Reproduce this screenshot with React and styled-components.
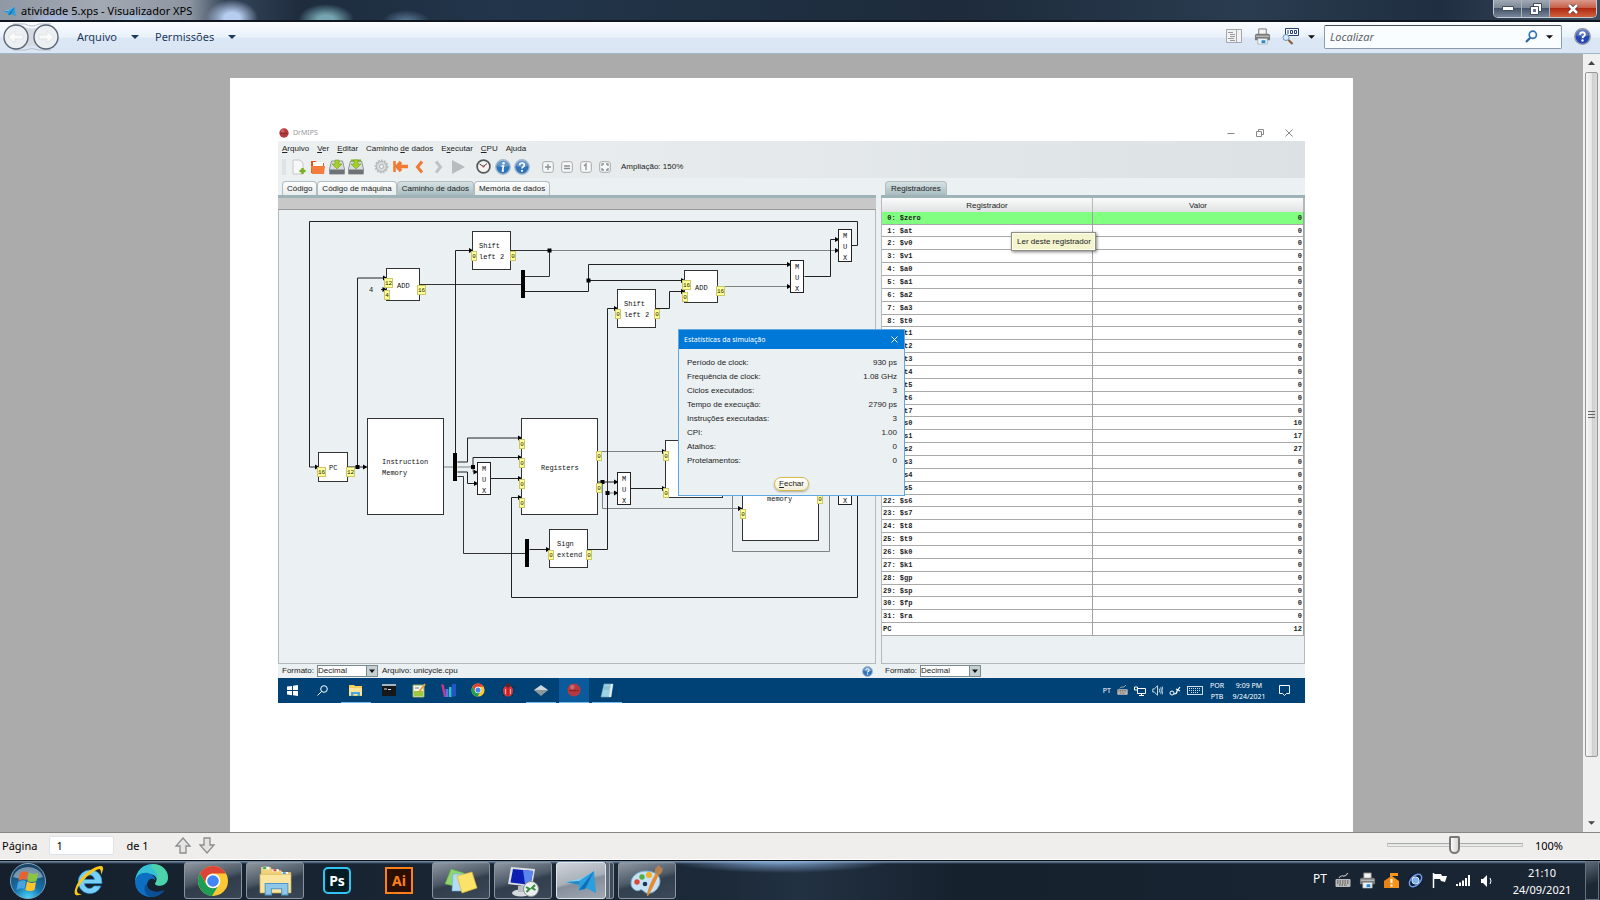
import React from "react";
import styled, { createGlobalStyle, css } from "styled-components";

const ui = '"Noto Sans", "Open Sans", sans-serif';
const swing = '"Liberation Sans", Arial, sans-serif';
const mono = '"Liberation Mono", "Courier New", monospace';

const GlobalStyle = createGlobalStyle`
  *, *::before, *::after { box-sizing: border-box; }
  html, body { margin: 0; height: 100%; }
  body { font-family: ${ui}; font-size: 11px; color: #000; overflow: hidden; }
  #root { height: 100%; }
  button, input, select { font: inherit; color: inherit; margin: 0; }
  button { border: 0; padding: 0; background: none; }
  svg { display: block; flex: none; }
`;

/* ---------- XPS viewer window ---------- */

const Screen = styled.div`
  display: flex;
  flex-direction: column;
  min-height: 100vh;
`;

const TitleBar = styled.header`
  display: flex;
  align-items: flex-start;
  height: 22px;
  padding: 0 3px 0 2px;
  border-bottom: 2px solid #10161f;
  background:
    radial-gradient(ellipse 26px 18px at 232px 18px, #b7cdf0 30%, transparent 100%),
    radial-gradient(ellipse 28px 16px at 326px 20px, #74a5b0 30%, transparent 100%),
    radial-gradient(ellipse 30px 14px at 55px 22px, #aab9e0 20%, transparent 100%),
    radial-gradient(ellipse 30px 14px at 135px 22px, #a9bfdc 20%, transparent 100%),
    radial-gradient(ellipse 24px 12px at 406px 22px, #5a7896 10%, transparent 100%),
    linear-gradient(90deg, #8f98a5 0, #a3a9b3 100px, #8c95a1 190px, #37475b 225px, #1e2c3e 300px, #22354a 500px, #1d2b3b 60%, #2a3c50 78%, #1f2e40 90%, #3c4c60 100%);
`;

const TitleText = styled.h1`
  flex: 1;
  display: flex;
  align-items: center;
  gap: 5px;
  margin: 0;
  height: 21px;
  font-size: 11px;
  font-weight: 400;
`;

const WindowButtons = styled.div`
  display: flex;
  height: 18px;
  border: 1px solid #c4cbd3;
  border-top: 0;
  border-radius: 0 0 5px 5px;
  overflow: hidden;
`;

const WindowButton = styled.button`
  display: grid;
  place-items: center;
  width: ${(p) => (p.$close ? 46 : 28)}px;
  border-right: ${(p) => (p.$close ? "0" : "1px solid #aab2bc")};
  background: ${(p) =>
    p.$close
      ? "linear-gradient(#d99a8c 0, #c8604a 45%, #b02a12 50%, #d0603c 100%)"
      : "linear-gradient(#a0a9b4 0, #7d8896 45%, #45536a 50%, #78869a 100%)"};
`;

const CommandBar = styled.nav`
  display: flex;
  align-items: center;
  height: 32px;
  padding: 0 9px 2px 3px;
  border-bottom: 1px solid #a3b4cd;
  background: linear-gradient(#fbfdff 0, #e9f1fa 48%, #dce7f5 52%, #dbe6f4 100%);
`;

const MenuButton = styled.button`
  display: flex;
  align-items: center;
  gap: 14px;
  margin-left: ${(p) => p.$lead}px;
  font-size: 11px;
  color: #1e395b;
`;

const Spacer = styled.span`
  flex: 1;
`;

const ToolButton = styled.button`
  display: grid;
  place-items: center;
  width: ${(p) => p.$w || 28}px;
  height: 24px;
`;

const SearchBox = styled.div`
  display: flex;
  align-items: center;
  width: 238px;
  height: 24px;
  margin: 0 12px 0 6px;
  padding: 0 1px 0 5px;
  border: 1px solid #8e9aa8;
  border-top-color: #444c55;
  border-radius: 2px;
  background: #fafdff;

  input {
    flex: 1;
    min-width: 0;
    padding: 0;
    border: 0;
    outline: 0;
    background: none;
    font-size: 11px;
  }
  input::placeholder { color: #5c6066; font-style: italic; opacity: 1; }
`;

const Viewer = styled.main`
  flex: 1;
  display: flex;
  min-height: 0;
  background: #ababab;
`;

const Sheet = styled.article`
  flex: 1;
  margin: 24px 230px 0;
  padding: 49px 48px 0;
  background: #fff;
`;

const ScrollBar = styled.div`
  display: flex;
  flex-direction: column;
  width: 17px;
  padding: 0 2px;
  background: #f0f0f0;
`;

const ScrollArrow = styled.button`
  display: grid;
  place-items: center;
  height: 18px;
`;

const ScrollThumb = styled.div`
  flex: 1;
  display: grid;
  place-items: center;
  margin-bottom: 57px;
  border: 1px solid #979797;
  border-radius: 2px;
  background: linear-gradient(90deg, #f7f7f7, #e6e6e6 50%, #cfcfd1 55%, #dadadc);
`;

const StatusBar = styled.footer`
  display: flex;
  align-items: center;
  height: 28px;
  padding: 0 37px 2px 2px;
  border-top: 1px solid #858585;
  border-bottom: 1px solid #fff;
  background: #f0eded;
  font-size: 11px;
`;

const PageInput = styled.input`
  width: 65px;
  height: 19px;
  margin: 0 12px 0 12px;
  padding: 0 6px;
  border: 1px solid #dde3ea;
  border-radius: 2px;
  background: #fff;
`;

const PageTotal = styled.span`
  width: 45px;
`;

const ZoomSlider = styled.input`
  appearance: none;
  width: 136px;
  height: 20px;
  margin: 0 12px 0 0;
  background: none;

  &::-webkit-slider-runnable-track {
    height: 4px;
    border: 1px solid #c6c6c6;
    border-top-color: #a9a9a9;
    background: #e8eaea;
  }
  &::-webkit-slider-thumb {
    appearance: none;
    width: 11px;
    height: 18px;
    margin-top: -8px;
    border: 2px solid #777;
    border-radius: 2px 2px 6px 6px;
    background: linear-gradient(90deg, #fafafa, #d8d8d8);
  }
`;

/* ---------- Windows 7 task bar ---------- */

const TaskBar = styled.footer`
  display: flex;
  height: 40px;
  padding: 0 1px 0 0;
  border-top: 1px solid #0a0f16;
  background:
    linear-gradient(rgba(150, 185, 220, 0.8), rgba(110, 140, 170, 0) 3px),
    radial-gradient(ellipse 110px 12px at 780px 0, rgba(130, 165, 210, 0.8) 20%, transparent 100%),
    linear-gradient(90deg, #16202d, #1b2938 45%, #223142 50%, #16212e 60%, #1a2634 100%);
`;

const TaskItems = styled.div`
  display: flex;
  gap: 4px;
`;

const TaskButton = styled.button`
  display: grid;
  place-items: center;
  width: ${(p) => p.$w || 58}px;
  margin: 1px 0;
  border-radius: 3px;
  ${(p) =>
    p.$open &&
    css`
      border: 1px solid #8b949e;
      background: linear-gradient(165deg, rgba(205, 212, 220, 0.65) 0, rgba(130, 142, 155, 0.5) 45%, rgba(70, 82, 96, 0.55) 55%, rgba(90, 105, 122, 0.5) 100%);
    `}
  ${(p) =>
    p.$active &&
    css`
      border: 1px solid #e0e5ea;
      background: linear-gradient(165deg, #d0d4da 0, #aab0b9 48%, #858e9a 54%, #a0a8b2 100%);
    `}
`;

const Stack = styled.div`
  display: flex;
  width: 58px;

  &::after {
    content: "";
    width: 8px;
    margin: 1px 0;
    border: 1px solid #8b949e;
    border-width: 1px 1px 1px 0;
    border-radius: 0 3px 3px 0;
    background: linear-gradient(90deg, #626e7c 0 3px, #9aa3ae 3px 4px, #3e4b5a 4px);
  }
`;

const AppBadge = styled.span`
  display: grid;
  place-items: center;
  width: 28px;
  height: 27px;
  border: 2px solid ${(p) => p.$tone};
  border-radius: ${(p) => p.$radius}px;
  background: ${(p) => p.$fill};
  color: ${(p) => p.$ink};
  font: 700 14px/1 ${ui};
`;

const Tray = styled.div`
  display: flex;
  align-items: center;
  color: #fff;
  font-size: 12px;
`;

const TrayIcon = styled.span`
  display: grid;
  place-items: center;
  width: 24px;
`;

const Language = styled.span`
  width: 16px;
  margin: 0 2px 5px 0;
`;

const Clock = styled.time`
  width: 86px;
  font-size: 11px;
  line-height: 17px;
  text-align: center;
  white-space: pre-line;
`;

const ShowDesktop = styled.button`
  align-self: stretch;
  width: 14px;
  border: 1px solid #66727f;
  background: linear-gradient(160deg, #5c6875, #1c2834 60%);
`;

/* ---------- DrMIPS capture on the page ---------- */

const Capture = styled.section`
  position: relative;
  font-family: ${swing};
  font-size: 8px;
  line-height: 12px;
  color: #222;
  background: #ebf0f2;
`;

const CaptureTitle = styled.div`
  display: flex;
  align-items: center;
  height: 14px;
  padding: 0 4px 2px 1px;
  gap: 4px;
  background: #fff;
  color: #999;
  font-family: ${ui};
  font-size: 7px;
`;

const CaptionButton = styled.button`
  display: grid;
  place-items: center;
  width: 25px;
  height: 12px;
`;

const Chrome = styled.div`
  background: linear-gradient(90deg, #ecf0f1, #dce1e3);
`;

const MenuRow = styled.div`
  display: flex;
  gap: 8px;
  height: 14px;
  padding: 1px 5px 0 4px;

  u { text-underline-offset: 1px; }
`;

const IconRow = styled.div`
  display: flex;
  align-items: center;
  height: 23px;
  padding-left: 4px;
`;

const Grip = styled.span`
  width: 4px;
  height: 16px;
  margin-right: 3px;
  background: #dfe3e4;
`;

const IconGroup = styled.div`
  display: flex;
  margin-right: 7px;
`;

const IconButton = styled.button`
  display: grid;
  place-items: center;
  width: 19px;
  height: 18px;
`;

const Panes = styled.div`
  display: grid;
  grid-template-columns: minmax(0, 598fr) minmax(0, 424fr);
  gap: 5px;
  padding-top: 3px;
`;

const Pane = styled.div`
  position: relative;
  display: flex;
  flex-direction: column;
`;

const TabRow = styled.div`
  display: flex;
  height: 17px;
  padding-left: 4px;
  border-bottom: 3px solid #9db3b8;
`;

const Tab = styled.button`
  padding: 0 ${(p) => p.$pad || 4}px;
  border: 1px solid #b3bcbf;
  border-bottom: 0;
  border-radius: 4px 4px 0 0;
  white-space: nowrap;
  background: ${(p) =>
    p.$on ? "linear-gradient(#d6e2e4, #a8bcc0)" : "linear-gradient(#fdfdfd, #e8eded)"};
`;

const HeaderStrip = styled.div`
  height: 12px;
  border-bottom: 1px solid #999;
  background: #c8c8c8;
`;

const Canvas = styled.div`
  flex: 1;
  border: 1px solid #b5babc;
  border-top: 0;

  svg { width: 100%; height: auto; }
`;

const FormatRow = styled.div`
  display: flex;
  align-items: center;
  height: 14px;
  padding: 0 3px 0 4px;
`;

const SelectBox = styled.span`
  position: relative;
  width: 61px;
  height: 12px;
  margin: 0 4px 0 3px;

  select {
    appearance: none;
    width: 100%;
    height: 100%;
    padding: 0;
    border: 1px solid #7b8a8f;
    border-radius: 0;
    background: #fff;
    line-height: 10px;
  }
  svg { position: absolute; top: 0; right: 0; pointer-events: none; }
`;

const TableFrame = styled.div`
  flex: 1;
  border: 1px solid #b5babc;
  border-width: 0 1px 1px;
`;

const RegTable = styled.table`
  width: 100%;
  border-collapse: separate;
  border-spacing: 0;
  table-layout: fixed;
  line-height: 10px;

  th {
    height: 14px;
    padding: 1px 0 0;
    border-right: 1px solid #b4b8ba;
    background: linear-gradient(#fbfbfb, #dfe1e2);
    font-weight: 400;
  }
`;

const RegRow = styled.tr`
  height: 13px;
  background: ${(p) => (p.$read ? "#80ff80" : "#fff")};
  font-family: ${mono};
  font-size: 7px;
  font-weight: 700;

  &:nth-child(7n + 2) { height: 12px; }

  td {
    padding: 0 1px;
    border-bottom: 1px solid #a9a9a9;
    border-right: 1px solid #a0a0a0;
    white-space: pre;
  }
  td + td { text-align: right; }
`;

const Tooltip = styled.div`
  position: absolute;
  left: 130px;
  top: 51px;
  padding: 3px 4px 2px 5px;
  border: 1px solid #8f8f84;
  background: #f4f4cf;
  outline: 1px solid #fffff0;
  outline-offset: -2px;
  box-shadow: 1px 1px 3px rgba(0, 0, 0, 0.5);
  white-space: nowrap;
`;

const Dialog = styled.section`
  position: absolute;
  left: 400px;
  top: 202px;
  width: 227px;
  height: 167px;
  display: flex;
  flex-direction: column;
  border: 1px solid #5fa9e0;
  background: #ebf0f2;
`;

const DialogTitle = styled.div`
  display: flex;
  align-items: center;
  justify-content: space-between;
  height: 19px;
  padding: 0 6px 0 5px;
  background: #0078d7;
  color: #fff;
  font: 7px/12px ${ui};
`;

const Stats = styled.dl`
  display: flex;
  flex-direction: column;
  margin: 0;
  padding: 7px 7px 0 8px;

  div {
    display: flex;
    justify-content: space-between;
    height: 14px;
    line-height: 14px;
  }
  dd { margin: 0; }
`;

const CloseButton = styled.button`
  align-self: center;
  height: 14px;
  margin-top: 9px;
  padding: 0 4px;
  border: 1px solid #d8b94a;
  border-radius: 7px;
  background: linear-gradient(#fff, #f2eed8);
  box-shadow: 0 1px 2px rgba(0, 0, 0, 0.3);
`;

const InnerTaskBar = styled.div`
  display: flex;
  justify-content: space-between;
  height: 25px;
  background: #004275;
  color: #fff;
  font-family: ${ui};
  font-size: 7px;
`;

const InnerApps = styled.div`
  display: flex;
  width: 347px;
`;

const InnerApp = styled.button`
  flex: 1;
  display: grid;
  place-items: center;
  margin: 0 ${(p) => (p.$open && !p.$active ? 3 : 0)}px;
  border-bottom: 1px solid ${(p) => (p.$open ? "#76b9ed" : "transparent")};
  background: ${(p) => (p.$active ? "#0a5a9c" : "none")};
`;

const InnerTray = styled.div`
  display: flex;
  align-items: center;
  gap: 6px;
  padding-right: 14px;
  line-height: 11px;
`;

const TwoLines = styled.span`
  min-width: ${(p) => p.$w}px;
  text-align: center;
  white-space: pre-line;
`;

/* ---------- icons ---------- */

const Caret = ({ size = 7, fill = "#1e395b" }) => (
  <svg width={size} height="4" viewBox="0 0 8 4"><path d="M0 0h8L4 4z" fill={fill} /></svg>
);

const Plane = ({ size }) => (
  <svg width={size} height={size} viewBox="0 0 32 32">
    <path d="M1 17 17 13 29 6l-3 8-12 6z" fill="#7fcdf3" />
    <path d="M14 16 29 6l2 22-10-5-7 3z" fill="#2a9edf" />
    <path d="M14 25 29 6 20 24z" fill="#0f6fb4" />
    <path d="M1 17l13-1v4z" fill="#2587c4" />
  </svg>
);

const NavArrows = () => (
  <svg width="58" height="28" viewBox="0 0 58 28">
    <path d="M10 1h12q7 4 14 0h12M10 27h12q7-3 14 0h12" fill="none" stroke="#b8bfc9" />
    <path d="M20 3q9 5 18 0v22q-9-5-18 0z" fill="#d5dae1" />
    {[13, 43].map((x) => (
      <circle key={x} cx={x} cy="14" r="12" fill="#edf0f3" stroke="#5a6576" strokeWidth="1.4" />
    ))}
    <path d="M5 14l7-6v4h8v4h-8v4zM51 14l-7-6v4h-8v4h8v4z" fill="#fafafa" stroke="#e0e3e7" />
  </svg>
);

const PrinterIcon = ({ size = 17 }) => (
  <svg width={size} height={size} viewBox="0 0 18 18">
    <path d="M5 1h8v6H5z" fill="#f4f4f4" stroke="#777" />
    <path d="M1 8q0-2 2-2h12q2 0 2 2v5H1z" fill="#7a7a7a" />
    <path d="M2 8h14v1.500H2z" fill="#b9b9b9" />
    <path d="M4 11h10v6H4z" fill="#e9f3fb" stroke="#999" strokeWidth=".6" />
    <path d="M8 13h4v3H8z" fill="#2e86c8" />
  </svg>
);

const PanelIcon = () => (
  <svg width="16" height="15" viewBox="0 0 16 15">
    <path d="M.5.500h15v13H.500z" fill="#f2f2f2" stroke="#a3a6aa" />
    <path d="M10.500 1v12" stroke="#a3a6aa" />
    <path d="M2 3.500h5M4 5.500h5M4 7.500h5M2 9.500h6M4 11.500h5" stroke="#999" />
  </svg>
);

const ZoomIcon = () => (
  <svg width="17" height="17" viewBox="0 0 17 17">
    <path d="M3.500.500h13v7h-13z" fill="#fff" stroke="#1f3d6d" />
    <path d="M6 2v4M8.500 2.500h2v3h-2zM12.500 2.500h2v3h-2z" fill="none" stroke="#1f3d6d" />
    <circle cx="4" cy="9.500" r="3" fill="#d4ecfa" stroke="#7393b0" />
    <path d="m6.500 12 4 4" stroke="#8b5a3a" strokeWidth="2.200" />
  </svg>
);

const SearchGlyph = () => (
  <svg width="13" height="13" viewBox="0 0 13 13">
    <circle cx="7.800" cy="4.800" r="3.600" fill="#fff" stroke="#3272b8" strokeWidth="1.700" />
    <path d="M5 8 1 12" stroke="#2a5ea8" strokeWidth="2.200" />
  </svg>
);

const RoundMark = ({ size, mark, tone = "#2f73b8", ring = "#9fb8d0" }) => (
  <svg width={size} height={size} viewBox="0 0 16 16">
    <circle cx="8" cy="8" r="7.200" fill={tone} stroke={ring} strokeWidth="1.400" />
    <path d="M2 7a6 6 0 0 1 12 0q-6 2-12 0z" fill="#fff" opacity=".25" />
    {mark === "?" ? (
      <g>
        <path d="M5.700 6.300Q5.800 4 8 4t2.300 2q0 1.200-1.300 1.900-1 .6-1 1.700" fill="none" stroke="#fff" strokeWidth="1.700" />
        <circle cx="8" cy="11.800" r="1.100" fill="#fff" />
      </g>
    ) : (
      <g>
        <circle cx="8.600" cy="4.200" r="1.200" fill="#fff" />
        <path d="M6.500 7h2L7.500 12H9" fill="none" stroke="#fff" strokeWidth="1.600" />
      </g>
    )}
  </svg>
);

const PageArrow = ({ down }) => (
  <svg width="24" height="17" viewBox="0 0 24 17">
    <path
      d={down ? "M9 1h6v7h4l-7 8-7-8h4z" : "M9 16h6V9h4l-7-8-7 8h4z"}
      fill="#e4e4e4" stroke="#8c8c8c" strokeWidth="1.300"
    />
  </svg>
);

const StartOrb = () => (
  <svg width="38" height="38" viewBox="0 0 38 38">
    <defs>
      <radialGradient id="orb" cx=".5" cy="1" r=".9">
        <stop offset="0" stopColor="#4fd8ff" /><stop offset=".45" stopColor="#1673ad" /><stop offset="1" stopColor="#1b4568" />
      </radialGradient>
    </defs>
    <circle cx="19" cy="19" r="17.500" fill="url(#orb)" stroke="#7fa5bd" />
    <path d="M4 15a15.500 13.500 0 0 1 30 0Q19 20 4 15z" fill="#fff" opacity=".4" />
    <path d="M11 11q4-3 8-1l-1.500 8q-4-2-8 1z" fill="#e9622b" />
    <path d="M20 10.500q4 2.500 9 .5l-1.500 8q-5 2-9 0z" fill="#8cc63e" />
    <path d="M9 20q4-3 8-1l-1.500 8q-4-2-8 1z" fill="#4aa3df" />
    <path d="M18 19.500q4 2.500 9 .5l-1.500 8q-5 2-9 0z" fill="#fcc62a" />
  </svg>
);

const IeIcon = () => (
  <svg width="32" height="32" viewBox="0 0 32 32">
    <path d="M16.500 5A11.800 11.800 0 1 0 28 21h-7q-4 4.500-8 1-1.500-1.500-1.500-3.500H29Q29 5 16.500 5zm-5 9.500q1-4.500 5-4.500t5 4.500z" fill="#79d0f6" stroke="#2b8fd0" strokeWidth=".7" fillRule="evenodd" />
    <path d="M28 10Q32 2 28.500 1q-5-1-15 7Q4 16 2 24.500T9 29q-5 .5-5-3.500T13.500 12Q23 4 26.500 4q2 1 1.500 6z" fill="#fbc919" />
  </svg>
);

const EdgeIcon = () => (
  <svg width="33" height="33" viewBox="0 0 32 32">
    <path d="M0 17C1 6 8 0 17 0c9 0 15 6 15 13 0 5-4 8-8.500 8-4 0-4.500-2-3.500-3 3-4-1-9-7-8C5 11 1 15 0 17z" fill="#35c1d6" />
    <path d="M17 0c9 0 15 6 15 13 0 5-4 8-8.500 8-4 0-4.500-2-3.500-3q5-9-5-15z" fill="#5ee08a" opacity=".6" />
    <path d="M0 17C1 11 6 8 11 8.500c5 .5 9 4 8.500 7.500-1-2-4-2.500-6-.5-6 7 3 16 15 10-3 4-8 6.500-13 6.500C7 32 0 26 0 17z" fill="#0c6fc2" />
    <path d="M11 19c0 6 8 10 17.500 6.500-3 4-8 6.500-13 6.500C8 30 8 22 11 19z" fill="#0b4f96" />
  </svg>
);

const ChromeIcon = ({ size }) => (
  <svg width={size} height={size} viewBox="0 0 32 32">
    <circle cx="16" cy="16" r="15" fill="#fcc934" />
    <path d="M3 8.500A15 15 0 0 1 29 8.500H16a7.500 7.500 0 0 0-6.800 4.500L8 17z" fill="#db4437" />
    <path d="M3 8.500a15 15 0 0 0 12 22.500l7-11.500a7.500 7.500 0 0 1-12.500 0z" fill="#1e9d55" />
    <circle cx="16" cy="16" r="7.300" fill="#fff" />
    <circle cx="16" cy="16" r="5.800" fill="#4285f4" />
  </svg>
);

const FolderIcon = ({ size }) => (
  <svg width={size} height={size} viewBox="0 0 32 32">
    <path d="M2 3h9l2 3h8l2 2h8v20H2z" fill="#f0d27a" />
    <path d="M4 4h6M13 6h6M22 9h6" stroke="#fff" strokeWidth="2.500" />
    <path d="M4 4h3" stroke="#3aa648" strokeWidth="2" /><path d="M14 6h3" stroke="#d84a38" strokeWidth="2" /><path d="M23 9h3" stroke="#3a96dd" strokeWidth="2" />
    <path d="M1 10h30v18H1z" fill="#f9e5a0" stroke="#d9b65a" strokeWidth=".7" />
    <path d="M6 30V19h22v11h-6v-6H12v6z" fill="#8fc7ea" stroke="#4f97c8" />
  </svg>
);

const NotesIcon = () => (
  <svg width="34" height="28" viewBox="0 0 34 28">
    <path d="M7 2l13 4-5 14-14-3z" fill="#8fd46e" stroke="#5ba844" strokeWidth=".6" />
    <path d="M9 7h14v17H8z" fill="#b5dcf7" stroke="#6daed8" strokeWidth=".6" />
    <path d="M13 9l15-4 5 16-15 5z" fill="#fbe26a" stroke="#d8b336" strokeWidth=".7" />
  </svg>
);

const RemoteIcon = () => (
  <svg width="34" height="32" viewBox="0 0 34 32">
    <ellipse cx="15" cy="28" rx="9" ry="3.500" fill="#d8dbde" />
    <path d="M12 21h7v6h-7z" fill="#b9bec4" />
    <path d="M5 2 29 4l-3 18-24-3z" fill="#dcdfe3" />
    <path d="M7 4 27 6l-2.500 14L4.500 17.500z" fill="#0c1fb4" />
    <path d="M17 5 27 6l-2.500 14L19 19z" fill="#5a84ee" />
    <circle cx="25" cy="24" r="7.500" fill="#eceeef" stroke="#8b9094" />
    <path d="m20 22 3.500 2-3 3M29 20l-3 3 3.500 2" fill="none" stroke="#2f8f3b" strokeWidth="2" />
  </svg>
);

const PaintIcon = () => (
  <svg width="34" height="32" viewBox="0 0 34 32">
    <path d="M16 6C7 6 1 12 1 18c0 7 7 9 9 7 2-1 3 1 6 3 7 2 14-5 14-12 0-6-6-10-14-10z" fill="#c5e3f5" stroke="#7aa9c8" />
    <circle cx="7" cy="17" r="2.700" fill="#d9463d" /><circle cx="12" cy="12" r="2.700" fill="#53ad45" />
    <circle cx="19" cy="10" r="3" fill="#f3ae2a" /><circle cx="15" cy="19" r="2.300" fill="#1a3a52" />
    <path d="M17 31q0-8 9-23l3 1Q22 25 18 31z" fill="#e78b32" />
    <path d="M25 8q-1-5 4-8 2 4 4 3-1 7-5 7z" fill="#b7814f" />
  </svg>
);

const KeyboardIcon = ({ size = 16, tone = "#bbb" }) => (
  <svg width={size} height={size} viewBox="0 0 16 16">
    <path d="M4 5q2-3 4-2t5-3" fill="none" stroke={tone} strokeWidth="1.200" />
    <rect x=".5" y="6" width="15" height="8" rx="1" fill={tone} />
    <path d="M2 8h12M2 10h12M4 12h8" stroke="#444" strokeDasharray="1.500 1" />
  </svg>
);

const AlertHouse = () => (
  <svg width="17" height="17" viewBox="0 0 17 17">
    <path d="M1 9 7 5V1h8v3H9l7 5v7H1z" fill="#f7941d" />
    <path d="M1 9l6-3v10H1z" fill="#d96f0a" opacity=".5" />
    <path d="M8.500 7v4M8.500 12.500v2" stroke="#fff" strokeWidth="2" />
  </svg>
);

const OrbitIcon = () => (
  <svg width="17" height="17" viewBox="0 0 17 17">
    <circle cx="8.500" cy="8.500" r="7.500" fill="#0f1c38" />
    <ellipse cx="8.500" cy="8.500" rx="7.500" ry="4.500" fill="none" stroke="#6f9de0" strokeWidth="1.500" transform="rotate(-45 8.500 8.500)" />
    <circle cx="8.500" cy="8.500" r="3.600" fill="#7fb0f0" stroke="#dce9ff" />
  </svg>
);

const FlagIcon = () => (
  <svg width="15" height="17" viewBox="0 0 15 17">
    <path d="M1.500 1v15" stroke="#fff" strokeWidth="1.500" /><path d="M2 2h7l1 2h5l-2 6-4-1-1-2H2z" fill="#fff" />
  </svg>
);

const SignalIcon = () => (
  <svg width="16" height="13" viewBox="0 0 16 13">
    <path d="M1 12v-2h2v2zM4 12V8.500h2V12zM7 12V6.500h2V12zM10 12V4h2v8zM13 12V1h2v11z" fill="#fff" />
  </svg>
);

const SpeakerIcon = ({ size = 14, waves = 1 }) => (
  <svg width={size} height={size} viewBox="0 0 14 14">
    <path d="M1 5h2l4-4v12L3 9H1z" fill={waves > 1 ? "none" : "#fff"} stroke="#fff" strokeWidth={waves > 1 ? 1 : 0} />
    <path d={waves > 1 ? "M9 4.500q1.500 2.500 0 5M11 3q2 4 0 8M13 2q2 5 0 10" : "M10 4q2 3 0 6"} fill="none" stroke="#fff" />
  </svg>
);

const Ball = ({ size }) => (
  <svg width={size} height={size} viewBox="0 0 12 12">
    <circle cx="6" cy="6" r="5.600" fill="#b53a3f" /><circle cx="4.500" cy="3.500" r="2" fill="#dc8583" opacity=".6" />
    <path d="M2 6.500h8" stroke="#7c1c22" strokeDasharray="1.500 .6" />
  </svg>
);

const NewDoc = () => (
  <svg width="15" height="16" viewBox="0 0 15 16">
    <path d="M2 1h7l3 3v11H2z" fill="#f7f7f7" stroke="#c5c8ca" /><path d="M11.500 9v6M8.500 12h6" stroke="#7cae1f" strokeWidth="2.400" />
  </svg>
);
const OpenFolder = () => (
  <svg width="16" height="16" viewBox="0 0 16 16">
    <path d="M1 2h5l1 2h7v10H1z" fill="#e0571b" /><path d="M3 3h10v5H3z" fill="#fff" /><path d="M1 7h14l-1 8H2z" fill="#f47c3c" />
  </svg>
);
const SaveIcon = ({ bar }) => (
  <svg width="16" height="16" viewBox="0 0 16 16">
    <path d="M2.500 2h11l2 8v5H.500v-5z" fill="#d9dcde" stroke="#8f9496" /><path d="M1 10.500h14V15H1z" fill="#6c7275" />
    {bar && <path d="M3 1.500h10" stroke="#7cae1f" strokeWidth="2" />}
    <path d="M6 1h4v4h3L8 10 3 5h3z" fill="#a5cf2c" stroke="#73a114" strokeWidth=".6" />
  </svg>
);
const GearIcon = () => (
  <svg width="15" height="15" viewBox="0 0 15 15">
    <circle cx="7.500" cy="7.500" r="6" fill="none" stroke="#b9bdbf" strokeWidth="1.800" strokeDasharray="2 1" />
    <circle cx="7.500" cy="7.500" r="5" fill="#d9dcdd" stroke="#adb1b3" /><circle cx="7.500" cy="7.500" r="2" fill="#f1f3f4" stroke="#adb1b3" />
  </svg>
);
const ResetIcon = () => (
  <svg width="15" height="13" viewBox="0 0 15 13">
    <path d="M1.500 1v11" stroke="#ee7a34" strokeWidth="2.600" /><path d="M8 2 4 6.500 8 11M4.500 6.500H15" fill="none" stroke="#ee7a34" strokeWidth="3.400" />
  </svg>
);
const Chevron = ({ right }) => (
  <svg width="9" height="14" viewBox="0 0 9 14">
    <path d={right ? "M2 1.500 6.500 7 2 12.500" : "M7 1.500 2.500 7 7 12.500"} fill="none" stroke={right ? "#c0c3c5" : "#ee7a34"} strokeWidth="3" />
  </svg>
);
const PlayIcon = () => (
  <svg width="14" height="14" viewBox="0 0 14 14"><path d="M1 0l13 7-13 7z" fill="#b9bcbe" /></svg>
);
const ClockIcon = () => (
  <svg width="15" height="15" viewBox="0 0 15 15">
    <circle cx="7.500" cy="7.500" r="6.400" fill="#f6f3f1" stroke="#55585a" strokeWidth="1.700" /><path d="M3.500 5 7.500 7.500l3.500-3" fill="none" stroke="#444" /><circle cx="7.500" cy="7.500" r="1" fill="#c33" />
  </svg>
);
const ZoomKey = ({ d }) => (
  <svg width="12" height="12" viewBox="0 0 12 12">
    <rect x=".7" y=".7" width="10.600" height="10.600" rx="2" fill="#f6f8f8" stroke="#a5a9ab" /><path d={d} fill="none" stroke="#8a8e90" strokeWidth="1.300" />
  </svg>
);

const small = {
  start: <svg width="11" height="11" viewBox="0 0 11 11"><path d="M0 1.500 5 1v4H0zM6 .8 11 0v5H6zM0 6h5v4.200L0 9.500zM6 6h5v5l-5-.8z" fill="#fff" /></svg>,
  search: <svg width="11" height="11" viewBox="0 0 11 11"><circle cx="7" cy="4" r="3.300" fill="none" stroke="#fff" /><path d="M4.500 6.500.500 10.500" stroke="#fff" /></svg>,
  explorer: <svg width="15" height="13" viewBox="0 0 15 13"><path d="M1 1h5l1 1h7v10H1z" fill="#f5cf5b" /><path d="M1 4h13v7H1z" fill="#fbe49a" /><path d="M3 12V8h9v4H9.500v-2h-4v2z" fill="#49a5dc" /></svg>,
  cmd: <svg width="14" height="12" viewBox="0 0 14 12"><path d="M0 0h14v12H0z" fill="#15171a" /><path d="M0 0h14v2H0z" fill="#a9b3bb" /><path d="M2 5h3M6 5.500h3" stroke="#ddd" /></svg>,
  editor: <svg width="14" height="15" viewBox="0 0 14 15"><path d="M1 2h11v12H1z" fill="#f2f6ea" stroke="#8aa45a" /><path d="M2 8h9v5H2z" fill="#9bcb3b" /><path d="M13 1 7 9" stroke="#e2a13a" strokeWidth="2" /><path d="M3 5h4" stroke="#777" /></svg>,
  books: <svg width="16" height="15" viewBox="0 0 16 15"><path d="M1 1l3 1 2 12H4z" fill="#d0338a" /><path d="M5.500 6h3v8h-3z" fill="#5b75e9" /><path d="M9 4h2.500v10H9z" fill="#2fc3ce" /><path d="M12 1h4v12l-4 1z" fill="#2753c8" /></svg>,
  chrome: <ChromeIcon size={14} />,
  bug: <svg width="12" height="14" viewBox="0 0 12 14"><path d="M1 5l-1-1M11 5l1-1M0 9h12M1 13l2-2M11 13l-2-2" stroke="#222" /><ellipse cx="6" cy="8" rx="5" ry="5.500" fill="#e3343b" /><circle cx="6" cy="2.500" r="2.300" fill="#6a2025" /><path d="M6 5v8" stroke="#511" strokeWidth=".6" /><path d="M3.500 6v5M8.500 6v5" stroke="#fcc" strokeWidth=".8" /></svg>,
  diamond: <svg width="14" height="11" viewBox="0 0 14 11"><path d="M7 0l7 5-7 5-7-5z" fill="#cfd6d9" /><path d="M0 5h14l-7 6z" fill="#8c979c" /></svg>,
  ball: <Ball size={14} />,
  notepad: <svg width="14" height="15" viewBox="0 0 14 15"><path d="M4 1h9l-2 13H1z" fill="#9fd4e4" stroke="#6aa3b5" strokeWidth=".7" /><path d="M11 1h2l-2 13H9z" fill="#e9eef0" /><path d="M4 4h6M4 6h5" stroke="#7fb6c6" /></svg>,
};

/* ---------- datapath drawing ---------- */

const wires = [
  ["M852 245.500h5.500v-24h-548v245.500h9", 1],
  ["M347.500 467h19", 1],
  ["M357.500 467v-189h29", 1],
  ["M381 289.500h5", 1],
  ["M419.500 284.500h102", 0],
  ["M455.500 453V250.500h17", 1],
  ["M511 250.500h38.500v26h-24.500", 0],
  ["M549.500 250.500h289", 2],
  ["M525 291.500h63.500v-27h202", 1],
  ["M588.500 280.500h96", 1],
  ["M443.500 467h10M457.500 467h16", 3],
  ["M457.500 462h10v-24h54", 1],
  ["M473 467v-9.500h48.500", 1],
  ["M473 467v5h4", 2],
  ["M457.500 472h10v11.500h10", 1],
  ["M457.500 476.500h6v77h62", 0],
  ["M490.500 478.500h31", 1],
  ["M857.500 485v112.500h-346v-100h10", 1],
  ["M597.500 451.500h68", 2],
  ["M597.500 482h20", 1],
  ["M602.500 482v26.500h139", 2],
  ["M587.500 549.500h20V308.500h10", 1],
  ["M607.500 493h10", 2],
  ["M630.500 488.500h35", 1],
  ["M655.500 308.500h14v-17h15", 1],
  ["M717.500 286.500h73", 2],
  ["M804.500 276.500h26v-37h8", 1],
  ["M529.500 549.500h20", 1],
  ["M732.500 480v71.500h97V480", 3],
];
const wireTones = ["#333", "#222", "#7f8384", "#7f8384"];

const blocks = [
  { x: 318.5, y: 452.5, w: 29, h: 29, t: [["PC", 329, 470]] },
  { x: 386.5, y: 268.5, w: 33, h: 32, t: [["ADD", 397, 288]] },
  { x: 472.5, y: 231.5, w: 38, h: 38, t: [["Shift", 479, 248], ["left 2", 479, 259]] },
  { x: 367.5, y: 418.5, w: 76, h: 96, t: [["Instruction", 382, 464], ["Memory", 382, 475]] },
  { x: 521.5, y: 418.5, w: 76, h: 96, t: [["Registers", 541, 470]] },
  { x: 549.5, y: 529.5, w: 38, h: 38, t: [["Sign", 557, 546], ["extend", 557, 557]] },
  { x: 617.5, y: 289.5, w: 38, h: 38, t: [["Shift", 624, 306], ["left 2", 624, 317]] },
  { x: 684.5, y: 270.5, w: 33, h: 32, t: [["ADD", 695, 290]] },
  { x: 665.5, y: 440.5, w: 57, h: 57, t: [] },
  { x: 742.5, y: 440.5, w: 76, h: 100, t: [["memory", 767, 501]] },
];

const muxes = [[477.5, 462.5], [617.5, 472.5], [790.5, 260.5], [838.5, 229.5], [838.5, 472.5]];
const bars = [[521, 270], [453, 453], [525, 539]];
const joints = [[357.5, 467], [549.5, 250.5], [588.5, 280.5], [473, 467], [602.5, 482], [607.5, 493]];
const ports = [
  ["16", 317, 467], ["12", 346, 467], ["12", 384, 278], ["4", 384, 290], ["16", 417, 285],
  ["0", 471, 251], ["0", 510, 251], ["0", 519, 439], ["0", 519, 458], ["0", 519, 479], ["0", 519, 498],
  ["0", 596, 451], ["0", 596, 483], ["0", 548, 550], ["0", 586, 550], ["0", 615, 309], ["0", 654, 309],
  ["16", 682, 280], ["0", 682, 292], ["16", 716, 286], ["0", 663, 451], ["0", 663, 488],
  ["0", 740, 509], ["0", 817, 494],
];

const Label = styled.text`
  font: 7px ${mono};
  fill: #111;
`;
const PortLabel = styled.text`
  font: 6px ${mono};
  fill: #222200;
  text-anchor: middle;
`;

const Datapath = () => (
  <svg viewBox="279 210 596 453" role="img" aria-label="Caminho de dados">
    <defs>
      <marker id="arrow" markerUnits="userSpaceOnUse" markerWidth="6" markerHeight="6" refX="5" refY="3" orient="auto">
        <path d="M1.500.500v5L6 3z" />
      </marker>
    </defs>
    {wires.map(([d, kind]) => (
      <path key={d} d={d} fill="none" stroke={wireTones[kind]} markerEnd={kind === 1 || kind === 2 ? "url(#arrow)" : undefined} />
    ))}
    {blocks.map((b) => (
      <g key={`${b.x} ${b.y}`}>
        <rect x={b.x} y={b.y} width={b.w} height={b.h} fill="#fff" stroke="#333" />
        {b.t.map(([s, x, y]) => <Label key={s} x={x} y={y}>{s}</Label>)}
      </g>
    ))}
    {muxes.map(([x, y]) => (
      <g key={`${x} ${y}`}>
        <rect x={x} y={y} width="13" height="32" fill="#fff" stroke="#222" />
        {["M", "U", "X"].map((s, i) => <Label key={s} x={x + 4.5} y={y + 8.5 + i * 11}>{s}</Label>)}
      </g>
    ))}
    <Label x="369" y="292">4</Label>
    {bars.map(([x, y]) => <rect key={x} x={x} y={y} width="4" height="28" />)}
    {joints.map(([x, y]) => <rect key={x} x={x - 2} y={y - 2} width="4" height="4" />)}
    {ports.map(([s, x, y]) => (
      <g key={`${x} ${y}`}>
        <rect x={x + 0.5} y={y + 0.5} width={s.length > 1 ? 8 : 5} height="9" fill="#ffff9c" stroke="#c9c96a" />
        <PortLabel x={x + (s.length > 1 ? 4.5 : 3)} y={y + 7}>{s}</PortLabel>
      </g>
    ))}
  </svg>
);

/* ---------- data ---------- */

const names = ["zero", "at", "v0", "v1", "a0", "a1", "a2", "a3", "t0", "t1", "t2", "t3", "t4", "t5", "t6", "t7",
  "s0", "s1", "s2", "s3", "s4", "s5", "s6", "s7", "t8", "t9", "k0", "k1", "gp", "sp", "fp", "ra"];
const values = { s0: 10, s1: 17, s2: 27 };
const registers = names
  .map((n, i) => [`${String(i).padStart(2)}: $${n}`, values[n] || 0])
  .concat([["PC", 12]]);

const stats = [
  ["Período de clock:", "930 ps"], ["Frequência de clock:", "1.08 GHz"], ["Ciclos executados:", "3"],
  ["Tempo de execução:", "2790 ps"], ["Instruções executadas:", "3"], ["CPI:", "1.00"],
  ["Atalhos:", "0"], ["Protelamentos:", "0"],
];

const menus = [["", "A", "rquivo"], ["", "V", "er"], ["", "E", "ditar"], ["Caminho ", "d", "e dados"],
  ["E", "x", "ecutar"], ["", "C", "PU"], ["A", "j", "uda"]];

const iconGroups = [
  [["Novo", <NewDoc />], ["Abrir", <OpenFolder />], ["Salvar", <SaveIcon />], ["Salvar como", <SaveIcon bar />]],
  [["Montar", <GearIcon />], ["Reiniciar", <ResetIcon />], ["Voltar", <Chevron />], ["Avançar", <Chevron right />], ["Executar", <PlayIcon />]],
  [["Latência", <ClockIcon />], ["Estatísticas", <RoundMark size={16} mark="i" />], ["Ajuda", <RoundMark size={16} mark="?" />]],
  [["Aumentar", <ZoomKey d="M6 3v6M3 6h6" />], ["Diminuir", <ZoomKey d="M3 5h6M3 7.500h6" />],
    ["Normal", <ZoomKey d="M4 5l2-2v6" />], ["Ajustar", <ZoomKey d="M3 5V3h2M7 3h2v2M9 7v2H7M5 9H3V7" />]],
];

const innerApps = ["start", "search", "explorer", "cmd", "editor", "books", "chrome", "bug", "diamond", "ball", "notepad"];

const Format = ({ id }) => (
  <>
    <label htmlFor={id}>Formato:</label>
    <SelectBox>
      <select id={id} defaultValue="Decimal"><option>Decimal</option></select>
      <svg width="12" height="12" viewBox="0 0 12 12"><path d="M.500.500h11v11H.500z" fill="#c4d0d2" stroke="#7b8a8f" /><path d="M3 4.500h6L6 8z" fill="#111" /></svg>
    </SelectBox>
  </>
);

const DrMips = () => (
  <Capture>
    <CaptureTitle>
      <Ball size={10} />DrMIPS<Spacer />
      <CaptionButton aria-label="Minimizar DrMIPS"><svg width="8" height="8" viewBox="0 0 8 8"><path d="M.500 4.500h7" stroke="#888" /></svg></CaptionButton>
      <CaptionButton aria-label="Restaurar DrMIPS"><svg width="8" height="8" viewBox="0 0 8 8"><path d="M.500 2.500h5v5h-5zM2.500 2.500v-2h5v5h-2" fill="none" stroke="#888" /></svg></CaptionButton>
      <CaptionButton aria-label="Fechar DrMIPS"><svg width="8" height="8" viewBox="0 0 8 8"><path d="m.500.500 7 7m0-7-7 7" stroke="#888" /></svg></CaptionButton>
    </CaptureTitle>
    <Chrome>
      <MenuRow>
        {menus.map(([a, u, b]) => <button key={a + u + b}>{a}<u>{u}</u>{b}</button>)}
      </MenuRow>
      <IconRow>
        <Grip />
        {iconGroups.map((group, i) => (
          <IconGroup key={i}>
            {group.map(([name, icon]) => <IconButton key={name} aria-label={name}>{icon}</IconButton>)}
          </IconGroup>
        ))}
        <span>Ampliação: 150%</span>
      </IconRow>
    </Chrome>
    <Panes>
      <Pane>
        <TabRow>
          <Tab>Código</Tab><Tab>Código de máquina</Tab><Tab $on>Caminho de dados</Tab><Tab>Memória de dados</Tab>
        </TabRow>
        <HeaderStrip />
        <Canvas><Datapath /></Canvas>
        <FormatRow>
          <Format id="data-format" />
          <span>Arquivo: unicycle.cpu</span>
          <Spacer />
          <RoundMark size={11} mark="?" />
        </FormatRow>
      </Pane>
      <Pane>
        <TabRow><Tab $on $pad={5}>Registradores</Tab></TabRow>
        <TableFrame>
          <RegTable>
            <thead><tr><th>Registrador</th><th>Valor</th></tr></thead>
            <tbody>
              {registers.map(([name, value]) => (
                <RegRow key={name} $read={name.endsWith("zero")}>
                  <td>{name}</td><td>{value}</td>
                </RegRow>
              ))}
            </tbody>
          </RegTable>
        </TableFrame>
        <FormatRow><Format id="register-format" /></FormatRow>
        <Tooltip role="tooltip">Ler deste registrador</Tooltip>
      </Pane>
    </Panes>
    <InnerTaskBar>
      <InnerApps>
        {innerApps.map((n) => (
          <InnerApp key={n} aria-label={n} $active={n === "ball"} $open={["explorer", "diamond", "ball", "notepad"].includes(n)}>{small[n]}</InnerApp>
        ))}
      </InnerApps>
      <InnerTray>
        <span>PT</span>
        <KeyboardIcon size={11} tone="#c8c0b8" />
        <svg width="12" height="10" viewBox="0 0 12 10"><path d="M3.500 2.500h8v5h-8zM5 9.500h5M7.500 7.500v2M.500 1h3v3h-3z" fill="none" stroke="#fff" /></svg>
        <SpeakerIcon size={11} waves={3} />
        <svg width="12" height="10" viewBox="0 0 12 10"><circle cx="3" cy="7" r="2" fill="none" stroke="#fff" /><path d="M5 8q3 0 3-3l3-4M7 3l4 2" fill="none" stroke="#fff" strokeWidth="1.200" /></svg>
        <svg width="16" height="9" viewBox="0 0 16 9"><rect x=".5" y=".5" width="15" height="8" fill="none" stroke="#cde" /><path d="M2 2.500h12M2 4.500h12M4 6.500h8" stroke="#cde" strokeDasharray="1 1" /></svg>
        <TwoLines $w={16}>{"POR\nPTB"}</TwoLines>
        <TwoLines $w={36}>{"9:09 PM\n9/24/2021"}</TwoLines>
        <svg width="18" height="11" viewBox="0 0 18 11"><path d="M6.500.500h10v8h-3l-2 2-2-2h-3z" fill="none" stroke="#fff" /></svg>
      </InnerTray>
    </InnerTaskBar>
    <Dialog role="dialog" aria-label="Estatísticas da simulação">
      <DialogTitle>
        Estatísticas da simulação
        <button aria-label="Fechar janela"><svg width="7" height="7" viewBox="0 0 7 7"><path d="m.500.500 6 6m0-6-6 6" stroke="#fff" /></svg></button>
      </DialogTitle>
      <Stats>
        {stats.map(([k, v]) => <div key={k}><dt>{k}</dt><dd>{v}</dd></div>)}
      </Stats>
      <CloseButton><u>F</u>echar</CloseButton>
    </Dialog>
  </Capture>
);

export default function App() {
  return (
    <Screen>
      <GlobalStyle />
      <TitleBar>
        <TitleText><Plane size={14} />atividade 5.xps - Visualizador XPS</TitleText>
        <WindowButtons>
          <WindowButton aria-label="Minimizar"><svg width="12" height="5" viewBox="0 0 12 5"><path d="M.500.500h11v4H.500z" fill="#fff" stroke="#444e5c" /></svg></WindowButton>
          <WindowButton aria-label="Restaurar"><svg width="12" height="12" viewBox="0 0 12 12"><path d="M3.500.500h8v8h-8z" fill="#fff" stroke="#444e5c" /><path d="M.500 3.500h8v8h-8z" fill="#fff" stroke="#444e5c" /><path d="M3 6h3v3H3z" fill="#69758a" /></svg></WindowButton>
          <WindowButton $close aria-label="Fechar"><svg width="12" height="10" viewBox="0 0 12 10"><path d="m2 1 8 8m0-8L2 9" stroke="#5c3038" strokeWidth="4" /><path d="m2 1 8 8m0-8L2 9" stroke="#fff" strokeWidth="2.500" /></svg></WindowButton>
        </WindowButtons>
      </TitleBar>
      <CommandBar>
        <NavArrows />
        <MenuButton $lead={16}>Arquivo<Caret size={8} /></MenuButton>
        <MenuButton $lead={16}>Permissões<Caret size={8} /></MenuButton>
        <Spacer />
        <ToolButton aria-label="Painel"><PanelIcon /></ToolButton>
        <ToolButton aria-label="Imprimir"><PrinterIcon /></ToolButton>
        <ToolButton aria-label="Zoom"><ZoomIcon /></ToolButton>
        <ToolButton $w={14} aria-label="Opções de zoom"><Caret fill="#111" /></ToolButton>
        <SearchBox>
          <input type="search" placeholder="Localizar" aria-label="Localizar" />
          <SearchGlyph />
          <ToolButton $w={22} aria-label="Opções de busca"><Caret fill="#111" /></ToolButton>
        </SearchBox>
        <button aria-label="Ajuda do visualizador"><RoundMark size={17} mark="?" tone="#2347b5" ring="#8b93a8" /></button>
      </CommandBar>
      <Viewer>
        <Sheet><DrMips /></Sheet>
        <ScrollBar>
          <ScrollArrow aria-label="Rolar para cima"><svg width="7" height="4" viewBox="0 0 7 4"><path d="M0 4h7L3.500 0z" fill="#444" /></svg></ScrollArrow>
          <ScrollThumb><svg width="7" height="7" viewBox="0 0 7 7"><path d="M0 .500h7M0 3.500h7M0 6.500h7" stroke="#666" /></svg></ScrollThumb>
          <ScrollArrow aria-label="Rolar para baixo"><Caret fill="#444" /></ScrollArrow>
        </ScrollBar>
      </Viewer>
      <StatusBar>
        <label htmlFor="page">Página</label>
        <PageInput id="page" defaultValue="1" />
        <PageTotal>de 1</PageTotal>
        <button aria-label="Página anterior"><PageArrow /></button>
        <button aria-label="Próxima página"><PageArrow down /></button>
        <Spacer />
        <ZoomSlider type="range" aria-label="Zoom da página" defaultValue="50" />
        <span>100%</span>
      </StatusBar>
      <TaskBar>
        <TaskItems>
          <TaskButton $w={56} aria-label="Iniciar"><StartOrb /></TaskButton>
          <TaskButton aria-label="Internet Explorer"><IeIcon /></TaskButton>
          <TaskButton aria-label="Edge"><EdgeIcon /></TaskButton>
          <TaskButton $open aria-label="Chrome"><ChromeIcon size={32} /></TaskButton>
          <TaskButton $open aria-label="Explorer"><FolderIcon size={33} /></TaskButton>
          <TaskButton><AppBadge $tone="#31c5f4" $ink="#fff" $fill="#001d26" $radius={5}>Ps</AppBadge></TaskButton>
          <TaskButton><AppBadge $tone="#ff7f18" $ink="#ff7f18" $fill="#2b0f02" $radius={0}>Ai</AppBadge></TaskButton>
          <TaskButton $open aria-label="Notas"><NotesIcon /></TaskButton>
          <TaskButton $open aria-label="Área remota"><RemoteIcon /></TaskButton>
          <Stack><TaskButton $w={50} $active aria-label="Visualizador XPS"><Plane size={32} /></TaskButton></Stack>
          <TaskButton $open aria-label="Paint"><PaintIcon /></TaskButton>
        </TaskItems>
        <Spacer />
        <Tray>
          <Language>PT</Language>
          <TrayIcon><KeyboardIcon /></TrayIcon>
          <TrayIcon><PrinterIcon /></TrayIcon>
          <TrayIcon><AlertHouse /></TrayIcon>
          <TrayIcon><OrbitIcon /></TrayIcon>
          <TrayIcon><FlagIcon /></TrayIcon>
          <TrayIcon><SignalIcon /></TrayIcon>
          <TrayIcon><SpeakerIcon /></TrayIcon>
          <Clock>{"21:10\n24/09/2021"}</Clock>
          <ShowDesktop aria-label="Mostrar área de trabalho" />
        </Tray>
      </TaskBar>
    </Screen>
  );
}
